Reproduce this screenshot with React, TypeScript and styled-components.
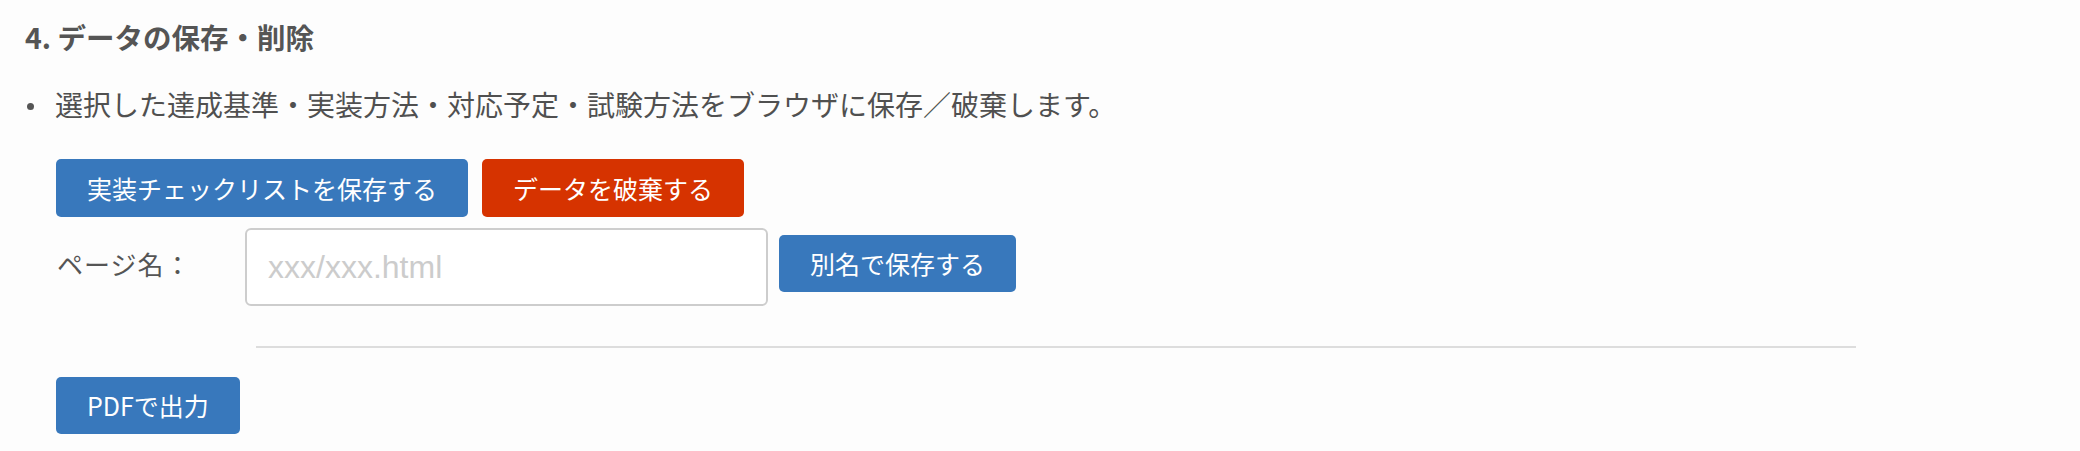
import styled, { createGlobalStyle } from "styled-components";

const GlobalStyle = createGlobalStyle`
  html, body {
    margin: 0;
    padding: 0;
    background: #fdfdfd;
  }
  body {
    font-family: "Noto Sans CJK JP", "Noto Sans", sans-serif;
    color: #555;
  }
`;

const Section = styled.section`
  padding: 17px 0 0 25px;
`;

const Heading = styled.h2`
  margin: 0;
  font-size: 28.5px;
  line-height: 40px;
  font-weight: 700;
  color: #555;
`;

const BulletList = styled.ul`
  list-style: none;
  margin: 27px 0 0;
  padding: 0;
`;

const BulletItem = styled.li`
  display: flex;
  align-items: center;
  font-size: 28px;
  line-height: 40px;
  color: #505050;

  &::before {
    content: "";
    width: 7px;
    height: 7px;
    border-radius: 50%;
    background: #555;
    margin: 4px 21px 0 2px;
    flex-shrink: 0;
  }
`;

const Block = styled.div`
  margin: 35px 0 0 31px;
`;

const ButtonRow = styled.div`
  display: flex;
  gap: 14px;
`;

const Button = styled.button<{ $variant?: "primary" | "danger"; $h?: number }>`
  height: ${(p) => p.$h ?? 57}px;
  padding: 0 31px;
  border: none;
  border-radius: 5px;
  background: ${(p) => (p.$variant === "danger" ? "#d63300" : "#3878bc")};
  color: #fff;
  font-family: "Noto Sans CJK JP", "Noto Sans", sans-serif;
  font-size: 25px;
  line-height: 1;
  cursor: pointer;
  white-space: nowrap;
`;

const FieldRow = styled.div`
  display: flex;
  align-items: center;
  margin-top: 11px;
`;

const FieldLabel = styled.label`
  width: 188px;
  font-size: 26px;
  letter-spacing: 1px;
  line-height: 36px;
  color: #555;
  margin: 0 0 6px 1px;
`;

const TextInput = styled.input`
  box-sizing: border-box;
  width: 523px;
  height: 78px;
  padding: 0 21px;
  border: 2px solid #cdcdcd;
  border-radius: 6px;
  background: #fff;
  font-family: "Liberation Sans", Arial, sans-serif;
  font-size: 32px;
  color: #333;
  outline: none;

  &::placeholder {
    color: #cccccc;
  }
`;

const SaveAsButton = styled(Button)`
  margin: 0 0 7px 11px;
`;

const Divider = styled.hr`
  width: 1600px;
  margin: 40px 0 0 200px;
  border: none;
  border-top: 2px solid #dddddd;
`;

const PdfRow = styled.div`
  margin-top: 29px;
`;

export default function App() {
  return (
    <>
      <GlobalStyle />
      <Section>
        <Heading>4. データの保存・削除</Heading>
        <BulletList>
          <BulletItem>
            選択した達成基準・実装方法・対応予定・試験方法をブラウザに保存／破棄します。
          </BulletItem>
        </BulletList>
        <Block>
          <ButtonRow>
            <Button $h={58}>実装チェックリストを保存する</Button>
            <Button $h={58} $variant="danger">
              データを破棄する
            </Button>
          </ButtonRow>
          <FieldRow>
            <FieldLabel htmlFor="page-name">ページ名：</FieldLabel>
            <TextInput id="page-name" type="text" placeholder="xxx/xxx.html" />
            <SaveAsButton>別名で保存する</SaveAsButton>
          </FieldRow>
          <Divider />
          <PdfRow>
            <Button>PDFで出力</Button>
          </PdfRow>
        </Block>
      </Section>
    </>
  );
}
